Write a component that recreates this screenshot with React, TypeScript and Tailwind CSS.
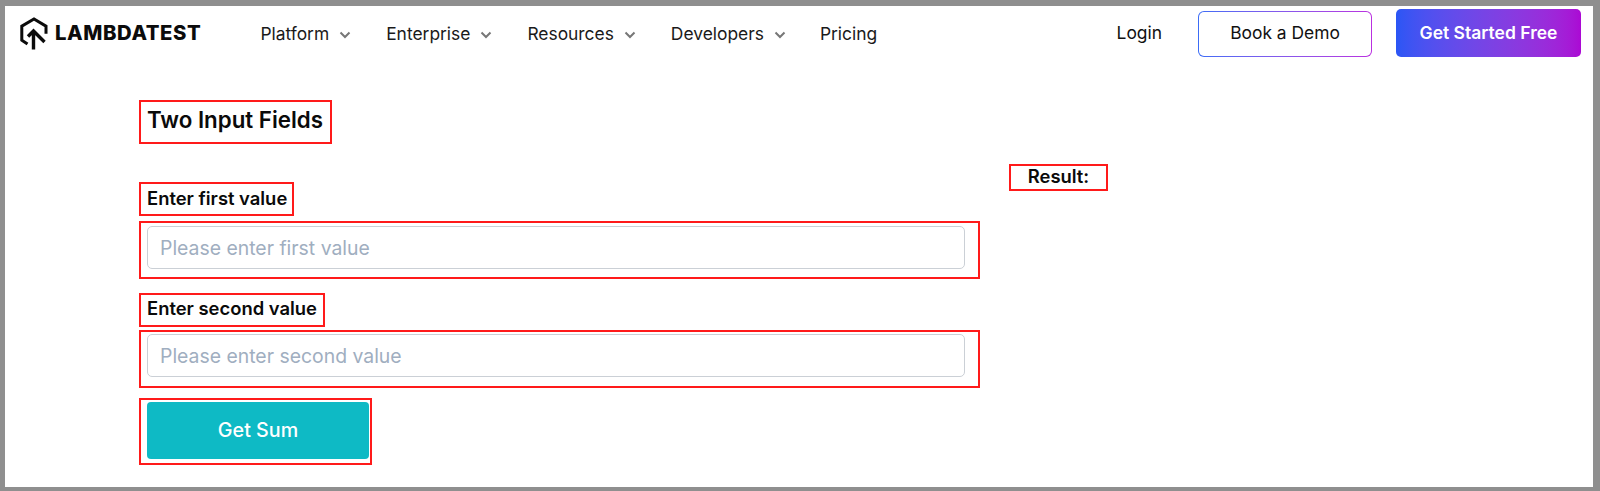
import React from "react";

const Chevron = () => (
  <svg width="12" height="8" viewBox="0 0 12 8" fill="none" className="ml-[10px] mt-[3px]">
    <path d="M1.5 1.5 6 6l4.5-4.5" stroke="#777777" strokeWidth="2" />
  </svg>
);

const Logo = () => (
  <svg width="30" height="33" viewBox="0 0 30 33" fill="none" className="mb-[2px]">
    <path d="M8.5 27 2.8 23.2V9.2L15 2l12 7.2v7.5" stroke="#0b0b0b" strokeWidth="3" />
    <path d="M14.5 32.5V14.5M9 19.5l5.5-5.5 11 11" stroke="#0b0b0b" strokeWidth="3.4" />
  </svg>
);

const NavItem = ({ label, className }: { label: string; className: string }) => (
  <div className={`flex items-center text-[17.4px] text-[#1a1a1a] ${className}`}>
    <span>{label}</span>
    <Chevron />
  </div>
);

const Field = ({
  label,
  placeholder,
  labelClass,
  boxClass,
}: {
  label: string;
  placeholder: string;
  labelClass: string;
  boxClass: string;
}) => (
  <>
    <div className={`h-[34px] border-2 border-[#ff1a1a] pl-[6px] flex items-center text-[18.4px] font-semibold text-[#0a0a0a] ${labelClass}`}>
      {label}
    </div>
    <div className={`h-[58px] w-[841px] border-2 border-[#ff1a1a] pl-[6px] pr-[13px] flex items-start ${boxClass}`}>
      <input
        readOnly
        placeholder={placeholder}
        className="h-[43px] w-full rounded-[5px] border border-[#cbd0d6] bg-white px-[12px] text-[19.4px] text-[#111] placeholder:text-[#a0aec0] outline-none"
      />
    </div>
  </>
);

export default function App() {
  return (
    <div
      className="h-[491px] w-[1600px] overflow-hidden bg-[#8f8f8f] pt-[6px] pl-[5px] pr-[7px] pb-[4px]"
      style={{ fontFamily: "Inter, 'Liberation Sans', sans-serif" }}
    >
      <div className="h-full bg-white">
        <header className="flex h-[56px] items-center pl-[14px]">
          <Logo />
          <span className="ml-[6px] mb-[2px] text-[20.3px] font-extrabold tracking-[0.6px] text-[#0b0b0b] leading-none">LAMBDATEST</span>
          <NavItem label="Platform" className="ml-[59px]" />
          <NavItem label="Enterprise" className="ml-[35px]" />
          <NavItem label="Resources" className="ml-[35px]" />
          <NavItem label="Developers" className="ml-[35px]" />
          <span className="ml-[34px] text-[17.4px] text-[#1a1a1a]">Pricing</span>
          <span className="ml-auto mb-[1px] text-[17.4px] text-[#111]">Login</span>
          <div className="ml-[36px] mb-[1px] h-[46px] w-[174px] rounded-[6px] bg-gradient-to-r from-[#3b6cf6] to-[#b92fe0] p-[1px]">
            <div className="flex h-full items-center justify-center rounded-[5px] bg-white text-[17.4px] text-[#111]">Book a Demo</div>
          </div>
          <div className="ml-[24px] mr-[12px] mb-[2px] flex h-[48px] w-[185px] items-center justify-center rounded-[5px] bg-gradient-to-r from-[#2a56f5] to-[#ab08d4] text-[17.5px] font-semibold text-white">
            Get Started Free
          </div>
        </header>

        <main className="flex pl-[134px]">
          <div className="pt-[38px]">
            <div className="flex h-[44px] w-[193px] items-center border-2 border-[#ff1a1a] pl-[6px] pb-[4px] text-[22.3px] font-semibold text-[#0a0a0a]">
              Two Input Fields
            </div>
            <div className="h-[38px]" />
            <Field label="Enter first value" placeholder="Please enter first value" labelClass="w-[155px]" boxClass="mt-[5px] pt-[3px]" />
            <div className="h-[14px]" />
            <Field label="Enter second value" placeholder="Please enter second value" labelClass="w-[186px] pb-[3px]" boxClass="mt-[3px] pt-[2px]" />
            <div className="mt-[10px] flex h-[67px] w-[233px] items-start border-2 border-[#ff1a1a] pl-[6px] pt-[2px]">
              <div className="flex h-[57px] w-[222px] items-center justify-center rounded-[4px] bg-[#0ebac5] text-[19.7px] font-medium text-white">
                Get Sum
              </div>
            </div>
          </div>
          <div className="ml-[29px] pt-[102px]">
            <div className="flex h-[27px] w-[99px] items-center justify-center border-2 border-[#ff1a1a] pb-[1px] text-[18.4px] font-semibold text-[#0a0a0a]">
              Result:
            </div>
          </div>
        </main>
      </div>
    </div>
  );
}
